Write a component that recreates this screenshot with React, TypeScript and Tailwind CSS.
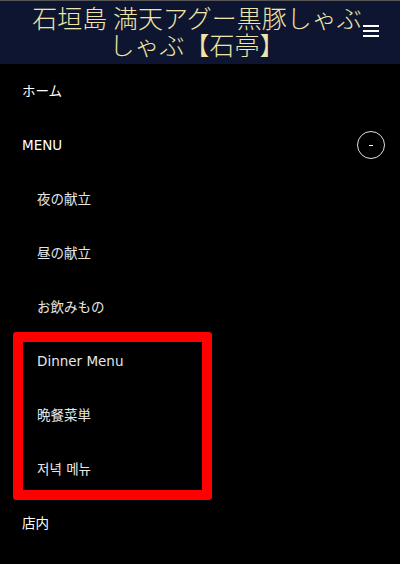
import React from "react";

const sans = { fontFamily: '"DejaVu Sans", "Noto Sans CJK JP", "Noto Sans CJK KR", sans-serif' };

type Item = { label: string; sub?: boolean; toggle?: boolean };

const items: Item[] = [
  { label: "ホーム" },
  { label: "MENU", toggle: true },
  { label: "夜の献立", sub: true },
  { label: "昼の献立", sub: true },
  { label: "お飲みもの", sub: true },
  { label: "Dinner Menu", sub: true },
  { label: "晩餐菜単", sub: true },
  { label: "저녁 메뉴", sub: true },
  { label: "店内" },
];

export default function App() {
  return (
    <div className="relative w-[400px] h-[564px] bg-black overflow-hidden" style={sans}>
      <header className="relative h-[64px] bg-[#0e1530] border-t border-[#555] flex justify-center pt-[3px] pr-[6px]">
        <h1
          className="text-[25px] leading-[27px] text-center text-[#eee5a6] font-light w-[390px]"
          style={{ fontFamily: '"Noto Sans CJK JP", serif' }}
        >
          石垣島 満天アグー黒豚しゃぶ
          <br />
          しゃぶ【石亭】
        </h1>
        <div className="absolute left-[363px] top-[24px] w-[16px] flex flex-col gap-[3px]">
          <span className="block h-[2px] bg-white" />
          <span className="block h-[2px] bg-white" />
          <span className="block h-[2px] bg-white" />
        </div>
      </header>
      <ul>
        {items.map((it) => (
          <li
            key={it.label}
            className={`h-[54px] flex items-center justify-between text-[13.5px] ${
              it.sub ? "pl-[37px] text-[#e6e6e6]" : "pl-[22px] text-white"
            } pr-[15px]`}
          >
            <span>{it.label}</span>
            {it.toggle && (
              <span className="w-[28px] h-[28px] rounded-full border border-[#e0e0e0] flex items-center justify-center">
                <span className="block w-[4px] h-[1px] bg-white" />
              </span>
            )}
          </li>
        ))}
      </ul>
      <div className="absolute left-[13px] top-[332px] w-[199px] h-[168px] border-[10px] border-[#ff0000] rounded-[3px]" />
    </div>
  );
}
